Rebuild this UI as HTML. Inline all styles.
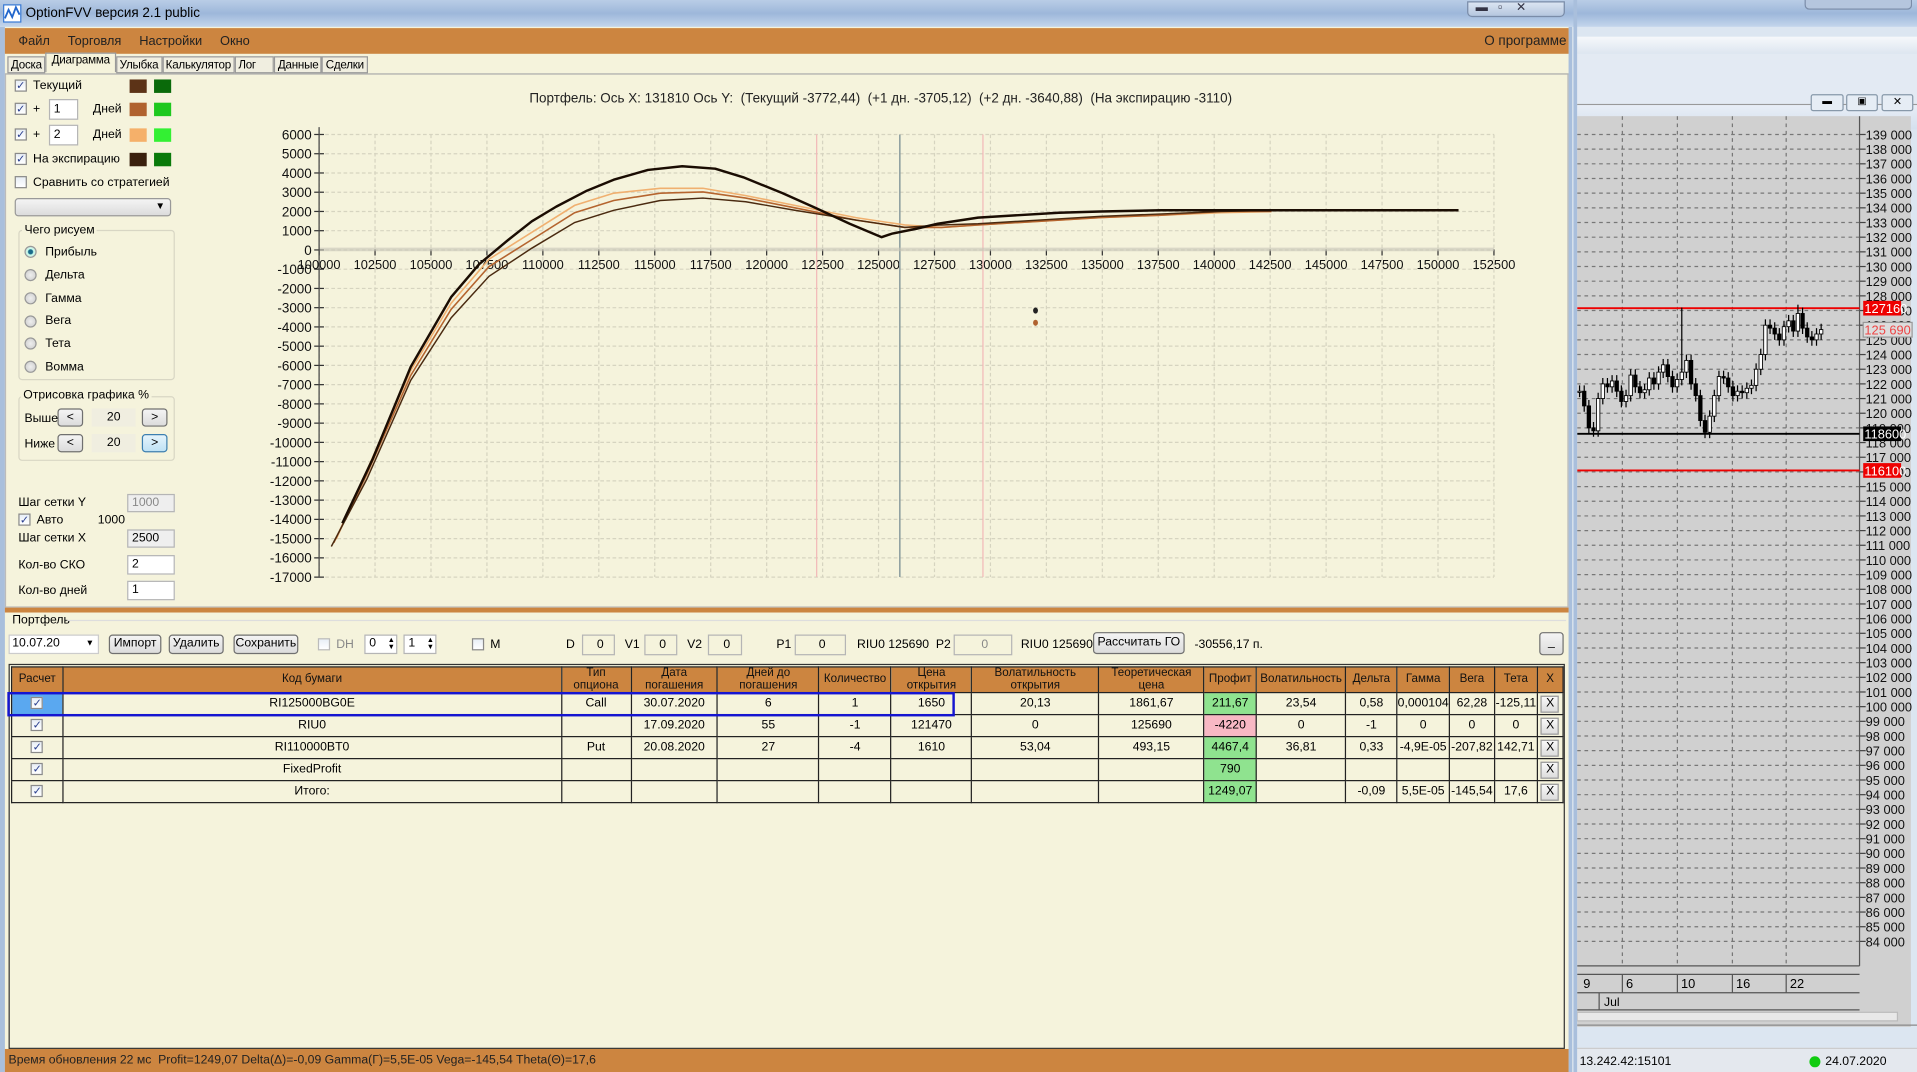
<!DOCTYPE html>
<html><head><meta charset="utf-8">
<style>
*{box-sizing:border-box;margin:0;padding:0}
html,body{width:1917px;height:1072px;overflow:hidden;background:#dfe8f3}
#s{position:absolute;left:0;top:0;width:1568px;height:877px;transform:scale(1.22258);transform-origin:0 0;font-family:"Liberation Sans","DejaVu Sans",sans-serif;font-size:10px;color:#000}
.a{position:absolute}
.cb{position:absolute;width:10px;height:10px;border:1px solid #8a8a8a;background:linear-gradient(#e8eef6,#fff);font-size:9px;line-height:8px;text-align:center;color:#2a3f8f}
.sw{position:absolute;width:14px;height:11px}
.inp{position:absolute;background:#fff;border:1px solid #b5b5b5;padding-left:3px;font-size:10px}
.btn{position:absolute;border:1px solid #707070;border-radius:3px;background:linear-gradient(#f4f4f4,#dcdcdc);text-align:center;font-size:10px}
.rd{position:absolute;width:10px;height:10px;border-radius:50%;border:1px solid #999;background:radial-gradient(#eee,#ccc)}
.grp{position:absolute;border:1px solid #d8d6c4;border-radius:3px}
table{border-collapse:collapse;position:absolute}
td{border:1px solid #222;text-align:center;font-size:10px;height:18px;padding:0;background:#f5f3dc}
th{border:1px solid #222;background:#cc8540;font-weight:normal;font-size:9.5px;line-height:10px;height:21px;padding:0;overflow:hidden;color:#111}
.g{background:#8fe38f}.r{background:#f8b8c4}
.x{display:inline-block;width:15px;height:14px;border:1px solid #999;background:linear-gradient(#f8f8f8,#ddd);line-height:12px}
.tb{border:1px solid #999;padding:1px 2px;background:#f0eee0;margin-top:1px;font-size:9.5px;letter-spacing:-0.2px}
</style></head><body><div id="s">
<div class="a" style="left:0;top:0;width:1568px;height:22px;background:linear-gradient(#b9cde6,#9db7da 50%,#c4d6ec)"></div>
<div class="a" style="left:1290px;top:22px;width:278px;height:855px;background:#dce6f1"></div>
<div class="a" style="left:1290px;top:30px;width:278px;height:14px;background:linear-gradient(#f6f8fb,#dde6f0)"></div>
<div class="a" style="left:1290px;top:44px;width:278px;height:42px;background:#e3eaf3;border-bottom:1px solid #999"></div>
<svg class="a" style="left:2px;top:3px" width="16" height="16"><rect x="1" y="1" width="14" height="14" fill="#fff" stroke="#3a7bd5"/><path d="M2 12 L5 5 L8 11 L11 3 L14 9" stroke="#2266cc" fill="none" stroke-width="1.5"/></svg>
<div class="a" style="left:21px;top:5px;font-size:11px">OptionFVV версия 2.1 public</div>
<div class="a" style="left:1200px;top:1px;width:80px;height:13px;border:1px solid #7a8ca8;border-radius:0 0 4px 4px;background:linear-gradient(#dbe5f2,#b5c6de)"></div>
<div class="a" style="left:1207px;top:1px;font-size:10px;color:#334">▬ &nbsp; ▫ &nbsp;&nbsp; ✕</div>
<div class="a" style="left:1476px;top:0px;width:88px;height:8px;border:1px solid #7a8ca8;border-top:none;border-radius:0 0 4px 4px;background:#b5c6de"></div>
<div class="a" style="left:0;top:22px;width:1286px;height:855px;background:#f5f3dc;border-left:4px solid #a9bfdc;border-right:3px solid #a9bfdc"></div>
<div class="a" style="left:4px;top:23px;width:1279px;height:21px;background:#cc8540"></div>
<div class="a" style="left:15px;top:28px;font-size:10.5px;color:#222">Файл &nbsp;&nbsp;&nbsp; Торговля &nbsp;&nbsp;&nbsp; Настройки &nbsp;&nbsp;&nbsp; Окно</div>
<div class="a" style="left:1214px;top:28px;font-size:11px;color:#222">О программе</div>
<div class="a" style="left:4px;top:60px;width:1279px;height:1px;background:#aaa"></div>
<div class="a" style="left:6px;top:45px;height:15px;display:flex">
<div class="tb">Доска</div>
<div class="tb" style="border-bottom:none;padding:0 4px;background:#f5f3dc;height:16px;margin-top:-2px">Диаграмма</div>
<div class="tb">Улыбка</div>
<div class="tb">Калькулятор</div>
<div class="tb" style="padding-right:14px">Лог</div>
<div class="tb">Данные</div>
<div class="tb">Сделки</div></div>
<div class="a" style="left:4px;top:61px;width:1279px;height:436px;border:1px solid #bbb;border-top:none"></div>
<div class="cb" style="left:12px;top:65px">✓</div><div class="a" style="left:27px;top:65px">Текущий</div>
<div class="sw" style="left:106px;top:65px;background:#5c3317"></div><div class="sw" style="left:126px;top:65px;background:#0a6a0a"></div>
<div class="cb" style="left:12px;top:84px">✓</div><div class="a" style="left:27px;top:84px">+</div>
<div class="inp" style="left:40px;top:81px;width:24px;height:17px;line-height:15px">1</div><div class="a" style="left:76px;top:84px">Дней</div>
<div class="sw" style="left:106px;top:84px;background:#b0622f"></div><div class="sw" style="left:126px;top:84px;background:#1ec81e"></div>
<div class="cb" style="left:12px;top:105px">✓</div><div class="a" style="left:27px;top:105px">+</div>
<div class="inp" style="left:40px;top:102px;width:24px;height:17px;line-height:15px">2</div><div class="a" style="left:76px;top:105px">Дней</div>
<div class="sw" style="left:106px;top:105px;background:#f5b06a"></div><div class="sw" style="left:126px;top:105px;background:#33f033"></div>
<div class="cb" style="left:12px;top:125px">✓</div><div class="a" style="left:27px;top:125px">На экспирацию</div>
<div class="sw" style="left:106px;top:125px;background:#3a200d"></div><div class="sw" style="left:126px;top:125px;background:#0a7a0a"></div>
<div class="cb" style="left:12px;top:144px"></div><div class="a" style="left:27px;top:144px">Сравнить со стратегией</div>
<div class="btn" style="left:12px;top:162px;width:128px;height:15px;border-color:#999"><span style="position:absolute;right:4px;top:1px;font-size:8px">▼</span></div>
<div class="grp" style="left:15px;top:188px;width:128px;height:123px"></div>
<div class="a" style="left:18px;top:183px;background:#f5f3dc;padding:0 2px">Чего рисуем</div>
<div class="rd" style="left:20px;top:201px;background:radial-gradient(#1a6a8a 30%,#cfe 45%,#ccc)"></div><div class="a" style="left:37px;top:201px">Прибыль</div>
<div class="rd" style="left:20px;top:220px"></div><div class="a" style="left:37px;top:220px">Дельта</div>
<div class="rd" style="left:20px;top:239px"></div><div class="a" style="left:37px;top:239px">Гамма</div>
<div class="rd" style="left:20px;top:258px"></div><div class="a" style="left:37px;top:257px">Вега</div>
<div class="rd" style="left:20px;top:276px"></div><div class="a" style="left:37px;top:276px">Тета</div>
<div class="rd" style="left:20px;top:295px"></div><div class="a" style="left:37px;top:295px">Вомма</div>
<div class="grp" style="left:15px;top:324px;width:128px;height:53px"></div>
<div class="a" style="left:17px;top:318px;background:#f5f3dc;padding:0 2px">Отрисовка графика %</div>
<div class="a" style="left:20px;top:337px">Выше</div>
<div class="btn" style="left:47px;top:334px;width:21px;height:15px;line-height:13px">&lt;</div>
<div class="a" style="left:75px;top:334px;width:36px;height:15px;background:#f0eee0;text-align:center;line-height:15px">20</div>
<div class="btn" style="left:116px;top:334px;width:21px;height:15px;line-height:13px">&gt;</div>
<div class="a" style="left:20px;top:358px">Ниже</div>
<div class="btn" style="left:47px;top:355px;width:21px;height:15px;line-height:13px">&lt;</div>
<div class="a" style="left:75px;top:355px;width:36px;height:15px;background:#f0eee0;text-align:center;line-height:15px">20</div>
<div class="btn" style="left:116px;top:355px;width:21px;height:15px;line-height:13px;border-color:#3c7fb1;background:linear-gradient(#e5f4fc,#bfe2f5)">&gt;</div>
<div class="a" style="left:15px;top:406px">Шаг сетки Y</div>
<div class="inp" style="left:104px;top:404px;width:39px;height:15px;background:#eeeeee;color:#888;line-height:13px">1000</div>
<div class="cb" style="left:15px;top:420px">✓</div><div class="a" style="left:30px;top:420px">Авто</div><div class="a" style="left:80px;top:420px">1000</div>
<div class="a" style="left:15px;top:435px">Шаг сетки X</div>
<div class="inp" style="left:104px;top:433px;width:39px;height:15px;background:#efefef;line-height:13px">2500</div>
<div class="a" style="left:15px;top:457px">Кол-во СКО</div>
<div class="inp" style="left:104px;top:454px;width:39px;height:16px;line-height:14px">2</div>
<div class="a" style="left:15px;top:478px">Кол-во дней</div>
<div class="inp" style="left:104px;top:475px;width:39px;height:16px;line-height:14px">1</div>
<div class="a" style="left:433px;top:75px;font-size:11px;color:#222">Портфель: Ось X: 131810 Ось Y: &nbsp;(Текущий -3772,44) &nbsp;(+1 дн. -3705,12) &nbsp;(+2 дн. -3640,88) &nbsp;(На экспирацию -3110)</div>
<svg class="a" style="left:0;top:0" width="1290" height="500" id="ch">
<g id="grid"></g>
<line x1="668" y1="110" x2="668" y2="472" stroke="#f2b8b8"/>
<line x1="804" y1="110" x2="804" y2="472" stroke="#f2b8b8"/>
<line x1="736" y1="110" x2="736" y2="472" stroke="#8fa0a0" stroke-width="1.3"/>
<line x1="261" y1="204" x2="1222" y2="204" stroke="#c8c6b8" stroke-width="3" opacity=".6"/>
<line x1="261" y1="104" x2="261" y2="472" stroke="#444"/>
<polyline fill="none" stroke="#f0b070" stroke-width="1.3" points="275,441 300,385 336,303 369,248 400,212 435,190 470,168 502,158 540,154 575,154 610,160 650,168 700,178 740,184 770,186 800,184 850,181 900,178 950,176 999,174 1040,173"/>
<polyline fill="none" stroke="#b5652f" stroke-width="1.3" points="273,444 300,388 336,307 369,253 400,218 435,196 470,174 502,164 540,158 575,157 610,162 650,170 700,180 740,186 770,186 800,184 850,181 900,178 950,176 999,173 1040,173"/>
<polyline fill="none" stroke="#4a2a10" stroke-width="1.2" points="271,447 300,392 336,311 369,260 400,226 435,203 470,182 502,172 540,164 575,162 610,165 650,172 700,180 740,186 770,184 800,183 850,180 900,177 950,175 999,173 1040,172"/>
<polyline fill="none" stroke="#1a0c02" stroke-width="2" stroke-linejoin="round" points="280,428 305,375 336,300 369,243 392,216 416,196 435,181 455,169 480,156 502,147 530,139 558,136 585,138 608,145 640,158 667,170 695,183 721,194 730,191 750,187 767,183 800,178 833,176 866,174 900,173 950,172 999,172 1100,172 1193,172"/>
<ellipse cx="847" cy="254" rx="2" ry="2.5" fill="#222"/>
<ellipse cx="847" cy="264" rx="2" ry="2.5" fill="#b0622f"/>
</svg>
<div class="a" style="left:4px;top:497px;width:1279px;height:4px;background:#cc8540"></div>
<div class="a" style="left:10px;top:502px">Портфель</div>
<div class="a" style="left:55px;top:507px;width:1226px;height:1px;background:#ddd"></div>
<div class="a" style="left:7px;top:519px;width:74px;height:16px;background:#fff;border:1px solid #ccc;padding-left:2px;line-height:14px">10.07.20<span style="position:absolute;right:3px;font-size:7px">▼</span></div>
<div class="btn" style="left:89px;top:519px;width:43px;height:16px;line-height:14px">Импорт</div>
<div class="btn" style="left:138px;top:519px;width:45px;height:16px;line-height:14px">Удалить</div>
<div class="btn" style="left:191px;top:519px;width:53px;height:16px;line-height:14px">Сохранить</div>
<div class="cb" style="left:260px;top:522px;border-color:#bbb"></div><div class="a" style="left:275px;top:522px;color:#888">DH</div>
<div class="inp" style="left:298px;top:519px;width:27px;height:16px;line-height:14px">0<span style="position:absolute;right:1px;top:1px;font-size:6px;line-height:6px">▲<br>▼</span></div>
<div class="inp" style="left:330px;top:519px;width:27px;height:16px;line-height:14px">1<span style="position:absolute;right:1px;top:1px;font-size:6px;line-height:6px">▲<br>▼</span></div>
<div class="cb" style="left:386px;top:522px"></div><div class="a" style="left:401px;top:522px">M</div>
<div class="a" style="left:463px;top:522px">D</div><div class="inp" style="left:476px;top:519px;width:27px;height:17px;line-height:15px;text-align:center;background:#f5f3dc">0</div>
<div class="a" style="left:511px;top:522px">V1</div><div class="inp" style="left:527px;top:519px;width:27px;height:17px;line-height:15px;text-align:center;background:#f5f3dc">0</div>
<div class="a" style="left:562px;top:522px">V2</div><div class="inp" style="left:579px;top:519px;width:28px;height:17px;line-height:15px;text-align:center;background:#f5f3dc">0</div>
<div class="a" style="left:635px;top:522px">P1</div><div class="inp" style="left:650px;top:519px;width:42px;height:17px;line-height:15px;text-align:center;background:#f5f3dc">0</div>
<div class="a" style="left:701px;top:522px">RIU0 125690 &nbsp;P2</div>
<div class="inp" style="left:780px;top:519px;width:48px;height:17px;line-height:15px;text-align:center;background:#f5f3dc;color:#888">0</div>
<div class="a" style="left:835px;top:522px">RIU0 125690</div>
<div class="btn" style="left:894px;top:517px;width:75px;height:18px;line-height:16px">Рассчитать ГО</div>
<div class="a" style="left:977px;top:522px">-30556,17 п.</div>
<div class="btn" style="left:1259px;top:517px;width:20px;height:19px;line-height:16px">_</div>
<div class="a" style="left:7px;top:543px;width:1273px;height:315px;border:1px solid #333;border-right:1px solid #333"></div>
<table style="left:9px;top:545px;width:1270px">
<colgroup><col style="width:42px"><col style="width:408px"><col style="width:57px"><col style="width:71px"><col style="width:83px"><col style="width:59px"><col style="width:66px"><col style="width:104px"><col style="width:86px"><col style="width:43px"><col style="width:73px"><col style="width:42px"><col style="width:42px"><col style="width:37px"><col style="width:35px"><col style="width:21px"></colgroup>
<tr><th>Расчет</th><th>Код бумаги</th><th>Тип<br>опциона</th><th>Дата<br>погашения</th><th>Дней до<br>погашения</th><th>Количество</th><th>Цена<br>открытия</th><th>Волатильность<br>открытия</th><th>Теоретическая<br>цена</th><th>Профит</th><th>Волатильность</th><th>Дельта</th><th>Гамма</th><th>Вега</th><th>Тета</th><th>X</th></tr>
<tr><td style="background:#5aa8f0"><span class="cb" style="position:relative;display:inline-block">✓</span></td><td>RI125000BG0E</td><td>Call</td><td>30.07.2020</td><td>6</td><td>1</td><td>1650</td><td>20,13</td><td>1861,67</td><td class="g">211,67</td><td>23,54</td><td>0,58</td><td>0,000104</td><td>62,28</td><td>-125,11</td><td><span class="x">X</span></td></tr>
<tr><td><span class="cb" style="position:relative;display:inline-block">✓</span></td><td>RIU0</td><td></td><td>17.09.2020</td><td>55</td><td>-1</td><td>121470</td><td>0</td><td>125690</td><td class="r">-4220</td><td>0</td><td>-1</td><td>0</td><td>0</td><td>0</td><td><span class="x">X</span></td></tr>
<tr><td><span class="cb" style="position:relative;display:inline-block">✓</span></td><td>RI110000BT0</td><td>Put</td><td>20.08.2020</td><td>27</td><td>-4</td><td>1610</td><td>53,04</td><td>493,15</td><td class="g">4467,4</td><td>36,81</td><td>0,33</td><td>-4,9E-05</td><td>-207,82</td><td>142,71</td><td><span class="x">X</span></td></tr>
<tr><td><span class="cb" style="position:relative;display:inline-block">✓</span></td><td>FixedProfit</td><td></td><td></td><td></td><td></td><td></td><td></td><td></td><td class="g">790</td><td></td><td></td><td></td><td></td><td></td><td><span class="x">X</span></td></tr>
<tr><td><span class="cb" style="position:relative;display:inline-block">✓</span></td><td>Итого:</td><td></td><td></td><td></td><td></td><td></td><td></td><td></td><td class="g">1249,07</td><td></td><td>-0,09</td><td>5,5E-05</td><td>-145,54</td><td>17,6</td><td><span class="x">X</span></td></tr>
</table>
<div class="a" style="left:6px;top:566px;width:775px;height:20px;border:2px solid #1515d0"></div>
<div class="a" style="left:4px;top:858px;width:1279px;height:19px;background:#cc8540"></div>
<div class="a" style="left:7px;top:862px;font-size:10px;color:#222">Время обновления 22 мс &nbsp;Profit=1249,07 Delta(Δ)=-0,09 Gamma(Γ)=5,5E-05 Vega=-145,54 Theta(Θ)=17,6</div>
<div class="a" style="left:1290px;top:86px;width:278px;height:20px;background:linear-gradient(#e8eef6,#d5e0ee)"></div>
<div class="a" style="left:1481px;top:77px;width:27px;height:14px;border:1px solid #8899aa;border-radius:2px;background:#e6edf5;text-align:center;font-size:8px">▬</div>
<div class="a" style="left:1510px;top:77px;width:26px;height:14px;border:1px solid #8899aa;border-radius:2px;background:#e6edf5;text-align:center;font-size:8px">▣</div>
<div class="a" style="left:1539px;top:77px;width:26px;height:14px;border:1px solid #8899aa;border-radius:2px;background:#e6edf5;text-align:center;font-size:9px">✕</div>
<div class="a" style="left:1290px;top:95px;width:273px;height:740px;background:#d0d0d0"></div>
<svg class="a" style="left:1290px;top:95px" width="278" height="745" id="rc"></svg>
<div class="a" style="left:1290px;top:838px;width:278px;height:1px;background:#888"></div>
<div class="a" style="left:1290px;top:857px;width:278px;height:20px;background:#e4e8ee;border-top:1px solid #ccc"></div>
<div class="a" style="left:1292px;top:863px;font-size:10px">13.242.42:15101</div>
<div class="a" style="left:1480px;top:864px;width:9px;height:9px;border-radius:50%;background:#1c1"></div>
<div class="a" style="left:1493px;top:863px;font-size:10px">24.07.2020</div>
<div class="a" style="left:1287px;top:0;width:3px;height:877px;background:#a9bfdc"></div>
</div>
<script>
var NS="http://www.w3.org/2000/svg";
function el(p,t,a,txt){var e=document.createElementNS(NS,t);for(var k in a)e.setAttribute(k,a[k]);if(txt!==undefined)e.textContent=txt;p.appendChild(e);return e;}
var g=document.getElementById('grid');
for(var i=0;i<=23;i++){var y=110+i*15.74;var v=6000-i*1000;
 el(g,'line',{x1:261,x2:1222,y1:y,y2:y,stroke:'#d6d4c0','stroke-dasharray':'3,2'});
 el(g,'line',{x1:257,x2:265,y1:y,y2:y,stroke:'#333'});
 el(g,'text',{x:255,y:y+4,'text-anchor':'end','font-size':'11',fill:'#111','font-family':'Liberation Sans'},String(v));}
for(var j=0;j<=21;j++){var x=261+j*45.76;
 el(g,'line',{x1:x,x2:x,y1:110,y2:472,stroke:'#d6d4c0','stroke-dasharray':'3,2'});
 el(g,'line',{x1:x,x2:x,y1:204,y2:209,stroke:'#333'});
 el(g,'text',{x:x,y:220,'text-anchor':'middle','font-size':'10.5',fill:'#111','font-family':'Liberation Sans'},String(100000+j*2500));}
var r=document.getElementById('rc');var ox=1290,oy=95;
for(var p=139;p>=84;p--){var y=110+(139-p)*12-oy;
 el(r,'line',{x1:0,x2:231,y1:y,y2:y,stroke:'#777','stroke-dasharray':'3,3'});
 el(r,'line',{x1:231,x2:236,y1:y,y2:y,stroke:'#444'});
 el(r,'text',{x:236,y:y+4,'font-size':'10.5',fill:'#111','font-family':'Liberation Sans'},p+' 000');}
[37,82,127,171].forEach(function(x){el(r,'line',{x1:x,x2:x,y1:0,y2:695,stroke:'#777','stroke-dasharray':'3,3'});});
el(r,'line',{x1:231,x2:231,y1:0,y2:695,stroke:'#555'});
el(r,'line',{x1:0,x2:231,y1:695,y2:695,stroke:'#555'});
function Y(pp){return 110+(139-pp)*12-oy;}
el(r,'line',{x1:0,x2:231,y1:Y(127.16),y2:Y(127.16),stroke:'#e00',"stroke-width":1.5});
el(r,'line',{x1:0,x2:231,y1:Y(116.1),y2:Y(116.1),stroke:'#e00',"stroke-width":1.5});
el(r,'line',{x1:0,x2:231,y1:Y(118.6),y2:Y(118.6),stroke:'#000',"stroke-width":1.5});
var pr=[121.5,120.5,119,118.8,121,122,121.8,122.2,121.5,120.8,121.2,122.6,121.8,121.4,121.6,122.4,122,122.8,123.3,122.5,121.8,122.3,122.8,123.6,122,121.2,119.5,118.7,119.8,121.2,122.5,122.4,121.8,121.2,121.5,121.4,121.7,121.9,123,124,126,125.8,125.4,125,125.9,126.3,125.6,126.8,125.8,125.2,125,125.4,125.7];
var x0=2,dx=3.8,prev=pr[0];
pr.forEach(function(c,i){var x=x0+i*dx,o=prev,h=Math.max(o,c)+0.4,l=Math.min(o,c)-0.4;if(i==22)h=127.2;if(i==47)h=127.4;
 el(r,'line',{x1:x,x2:x,y1:Y(h),y2:Y(l),stroke:'#000'});
 el(r,'rect',{x:x-1.4,y:Y(Math.max(o,c)),width:2.8,height:Math.max(1,Math.abs(o-c)*12),fill:c<o?'#000':'#fff',stroke:'#000','stroke-width':.7});prev=c;});
function lab(v,yv,bg,fg,bd){var y=Y(yv);el(r,'rect',{x:234,y:y-6,width:(bd?40:31),height:12,fill:bg,stroke:bd||'none'});el(r,'text',{x:235,y:y+4,'font-size':'10.5',fill:fg,'font-family':'Liberation Sans'},v);}
lab('127160',127.16,'#e00','#fff');lab('125 690',125.69,'#ddd','#e44','#999');lab('118600',118.6,'#000','#fff');lab('116100',116.1,'#e00','#fff');
var dy=797-oy;el(r,'rect',{x:0,y:dy-2,width:273,height:45,fill:'#d0d0d0'});
el(r,'line',{x1:0,x2:231,y1:dy,y2:dy,stroke:'#555'});el(r,'line',{x1:0,x2:231,y1:dy+15,y2:dy+15,stroke:'#555'});el(r,'line',{x1:0,x2:231,y1:dy+29,y2:dy+29,stroke:'#555'});
[[2,'9'],[37,'6'],[82,'10'],[127,'16'],[171,'22']].forEach(function(a){if(a[0]>5)el(r,'line',{x1:a[0],x2:a[0],y1:dy,y2:dy+15,stroke:'#555'});el(r,'text',{x:a[0]+3,y:dy+11,'font-size':'10.5','font-family':'Liberation Sans'},a[1]);});
el(r,'line',{x1:18,x2:18,y1:dy+15,y2:dy+29,stroke:'#555'});el(r,'text',{x:22,y:dy+26,'font-size':'10','font-family':'Liberation Sans'},'Jul');
el(r,'rect',{x:0,y:dy+31,width:262,height:7,fill:'#e8e8e8',stroke:'#bbb'});
</script>
</body></html>
